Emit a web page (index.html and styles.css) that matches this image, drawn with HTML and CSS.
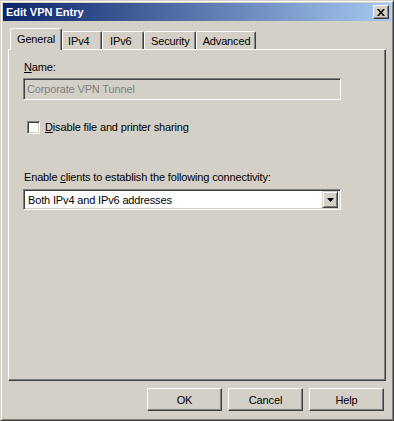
FILE: index.html
```html
<!DOCTYPE html>
<html lang="en">
<head>
    <meta charset="UTF-8">
    <title>Edit VPN Entry</title>
    <link rel="stylesheet" href="styles.css">
</head>
<body>
    <div class="window">
        <!-- Title bar -->
        <div class="titlebar">
            <span class="title">Edit VPN Entry</span>
            <div class="close-btn">
                <svg width="8" height="7" viewBox="0 0 8 7">
                    <path d="M0 0h2l2 2.5L6 0h2L5 3.5 8 7H6L4 4.5 2 7H0l3-3.5z" fill="#000"/>
                </svg>
            </div>
        </div>

        <div class="body">
            <!-- Tabs -->
            <div class="tabs">
                <div class="tab active">General</div>
                <div class="tab">IPv4</div>
                <div class="tab">IPv6</div>
                <div class="tab">Security</div>
                <div class="tab">Advanced</div>
            </div>

            <div class="panel">
                <label class="field-label"><u>N</u>ame:</label>
                <div class="textbox disabled">Corporate VPN Tunnel</div>

                <div class="check-row">
                    <span class="checkbox"></span>
                    <span><u>D</u>isable file and printer sharing</span>
                </div>

                <label class="field-label connect-label">Enable <u>c</u>lients to establish the following connectivity:</label>
                <div class="select">
                    <span class="select-text">Both IPv4 and IPv6 addresses</span>
                    <span class="select-arrow">
                        <svg width="7" height="4" viewBox="0 0 7 4"><path d="M0 0h7L3.5 4z" fill="#000"/></svg>
                    </span>
                </div>
            </div>

            <!-- Dialog buttons -->
            <div class="buttons">
                <div class="btn">OK</div>
                <div class="btn">Cancel</div>
                <div class="btn">Help</div>
            </div>
        </div>
    </div>
</body>
</html>
```

FILE: styles.css
```css
body {
    margin: 0;
    background-color: #d4d0c8;
    font-family: 'Liberation Sans', Arial, sans-serif;
    font-size: 11px;
    letter-spacing: -0.15px;
    color: #000;
}
.window {
    width: 394px;
    height: 421px;
    box-sizing: border-box;
    border: 1px solid;
    border-color: #d4d0c8 #404040 #404040 #d4d0c8;
    box-shadow: inset 1px 1px #fff, inset -1px -1px #808080;
    padding: 2px;
    background-color: #d4d0c8;
}
.titlebar {
    height: 18px;
    display: flex;
    align-items: center;
    justify-content: space-between;
    background: linear-gradient(to right, #0a246a, #a6caf0);
    padding: 0 2px 0 3px;
}
.title {
    color: #fff;
    font-weight: bold;
    font-size: 11px;
    letter-spacing: 0;
}
.close-btn {
    width: 16px;
    height: 14px;
    box-sizing: border-box;
    background-color: #d4d0c8;
    border: 1px solid;
    border-color: #fff #404040 #404040 #fff;
    box-shadow: inset -1px -1px #808080;
    display: flex;
    align-items: center;
    justify-content: center;
}
.body {
    padding: 0 5px;
}
.tabs {
    display: flex;
    align-items: flex-end;
    height: 28px;
    padding-left: 4px;
}
.tab {
    height: 18px;
    min-width: 40px;
    box-sizing: border-box;
    padding: 2px 5px 0 5px;
    border: 1px solid #fff;
    border-bottom: none;
    border-right-color: #404040;
    box-shadow: inset -1px 0 #808080;
    border-radius: 2px 2px 0 0;
    background-color: #d4d0c8;
    line-height: 14px;
}
.tab:nth-child(2) {
    padding-left: 5px;
}
.tab:nth-child(3) {
    min-width: 42px;
    padding-left: 7px;
}
.tab:nth-child(4),
.tab:nth-child(5) {
    padding-left: 6px;
}
.tab.active {
    height: 22px;
    margin-left: -2px;
    padding: 3px 6px 0 6px;
    position: relative;
    top: 1px;
    z-index: 3;
}
.panel {
    height: 332px;
    box-sizing: border-box;
    border: 1px solid;
    border-color: #fff #404040 #404040 #fff;
    box-shadow: inset -1px -1px #808080;
    padding: 10px 44px 0 15px;
}
.field-label {
    display: block;
    line-height: 14px;
}
.textbox {
    margin-top: 4px;
    height: 22px;
    box-sizing: border-box;
    width: 318px;
    margin-left: -1px;
    border: 1px solid;
    border-color: #808080 #fff #fff #808080;
    box-shadow: inset 1px 1px #404040, inset -1px -1px #d4d0c8;
    padding: 0 3px;
    line-height: 20px;
}
.textbox.disabled {
    color: #808080;
    background-color: #d4d0c8;
}
.check-row {
    display: flex;
    align-items: center;
    gap: 5px;
    margin-top: 20px;
    margin-left: 3px;
    line-height: 14px;
}
.checkbox {
    width: 13px;
    height: 13px;
    box-sizing: border-box;
    background-color: #fff;
    border: 1px solid;
    border-color: #808080 #fff #fff #808080;
    box-shadow: inset 1px 1px #404040, inset -1px -1px #d4d0c8;
}
.connect-label {
    margin-top: 36px;
}
.select {
    margin-top: 5px;
    margin-left: -1px;
    width: 318px;
    height: 21px;
    box-sizing: border-box;
    background-color: #fff;
    border: 1px solid;
    border-color: #808080 #fff #fff #808080;
    box-shadow: inset 1px 1px #404040, inset -1px -1px #d4d0c8;
    display: flex;
    align-items: center;
    justify-content: space-between;
    padding: 2px 2px 2px 4px;
}
.select-arrow {
    width: 16px;
    height: 17px;
    box-sizing: border-box;
    background-color: #d4d0c8;
    border: 1px solid;
    border-color: #d4d0c8 #404040 #404040 #d4d0c8;
    box-shadow: inset 1px 1px #fff, inset -1px -1px #808080;
    display: flex;
    align-items: center;
    justify-content: center;
}
.buttons {
    display: flex;
    justify-content: flex-end;
    gap: 6px;
    margin-top: 7px;
    padding-right: 2px;
}
.btn {
    width: 75px;
    height: 23px;
    box-sizing: border-box;
    border: 1px solid;
    border-color: #fff #404040 #404040 #fff;
    box-shadow: inset -1px -1px #808080;
    display: flex;
    align-items: center;
    justify-content: center;
}
```
